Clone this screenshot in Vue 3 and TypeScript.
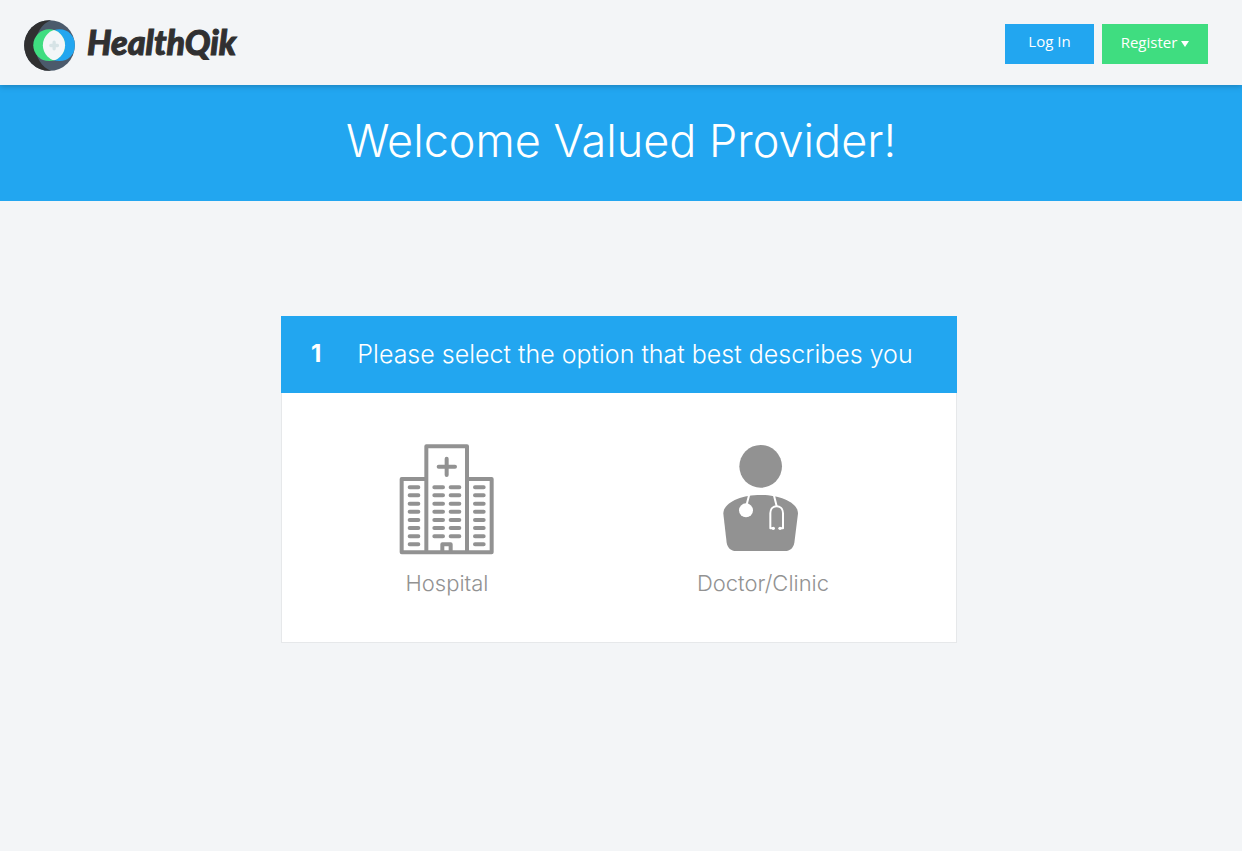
<script setup lang="ts">
import { ref } from 'vue'

type ProviderKind = 'hospital' | 'clinic'

const selected = ref<ProviderKind | null>(null)

const sideRows: number[] = [157, 181, 206, 230, 255, 279, 304, 328]
const middleRows: number[] = sideRows.slice(0, 7)
</script>

<template>
  <div class="page">
    <header class="topbar">
      <a class="brand" href="#">
        <svg class="mark" viewBox="18 17 154 154" aria-hidden="true">
          <defs>
            <clipPath id="disc"><circle cx="95" cy="94" r="76.5" /></clipPath>
            <clipPath id="green-lens"><circle cx="94" cy="93" r="48" /></clipPath>
          </defs>
          <g clip-path="url(#disc)">
            <rect x="18" y="17" width="154" height="154" fill="#4b5a6b" />
            <path d="M18 17H100C72 28 52 58 52 94S72 160 100 171H18Z" fill="#303031" />
            <circle cx="125" cy="93" r="48" fill="#22a6f0" />
            <circle cx="94" cy="93" r="48" fill="#3fdd80" />
            <circle cx="123" cy="93" r="48" fill="#f3f6f8" clip-path="url(#green-lens)" />
          </g>
          <path d="M109 84V104M99 94H119" stroke="#d6e3e6" stroke-width="10" stroke-linecap="round" />
        </svg>
        <span class="wordmark">HealthQik</span>
      </a>
      <nav class="actions">
        <button class="btn login" type="button">Log In</button>
        <button class="btn register" type="button">
          Register
          <svg class="caret" viewBox="0 0 8 6" aria-hidden="true"><path d="M0 0H8L4 6Z" fill="currentColor" /></svg>
        </button>
      </nav>
    </header>

    <section class="banner">
      <h1>Welcome Valued Provider!</h1>
    </section>

    <main class="content">
      <section class="card">
        <h2 class="step">
          <span class="number">1</span>
          <span>Please select the option that best describes you</span>
        </h2>
        <div class="options">
          <button class="option" type="button" :aria-pressed="selected === 'hospital'" @click="selected = 'hospital'">
            <svg class="hospital" viewBox="30 24 288 336" fill="none" stroke="currentColor" stroke-width="12" aria-hidden="true">
              <g stroke-linejoin="round">
                <path d="M112 132H38V352H308V132H234" />
                <path d="M112 352V34H234V352" />
                <path d="M160 352V328H185V352" />
              </g>
              <g stroke-linecap="round">
                <path d="M173 71V120M149 95H198" />
                <path v-for="y in sideRows" :key="`side-${y}`" :d="`M62 ${y}H88M258 ${y}H284`" />
                <path v-for="y in middleRows" :key="`middle-${y}`" :d="`M136 ${y}H162M185 ${y}H211`" />
              </g>
            </svg>
            <span class="label">Hospital</span>
          </button>
          <button class="option" type="button" :aria-pressed="selected === 'clinic'" @click="selected = 'clinic'">
            <svg class="doctor" viewBox="129 24 240 336" aria-hidden="true">
              <circle cx="242" cy="94" r="64" fill="currentColor" />
              <path d="M130 236C130 202 184 180 242 180S354 202 354 236L343 323C340 339 330 348 315 348H168C153 348 143 339 140 323Z" fill="currentColor" />
              <circle cx="198" cy="226" r="21" fill="#fff" />
              <g fill="none" stroke="#fff" stroke-width="6">
                <path d="M208 178L199 212M281 178L290 214" />
                <path d="M279 280H271V235C271 207 309 207 309 235V280H301" stroke-linejoin="round" />
              </g>
              <circle cx="280" cy="280" r="5" fill="#fff" />
              <circle cx="300" cy="280" r="5" fill="#fff" />
            </svg>
            <span class="label">Doctor/Clinic</span>
          </button>
        </div>
      </section>
    </main>
  </div>
</template>

<style>
body {
  margin: 0;
  background: #f3f5f7;
}
</style>

<style scoped>
.page {
  min-height: 100vh;
  background: #f3f5f7;
  font-family: Inter, 'Liberation Sans', sans-serif;
}

.topbar {
  position: relative;
  display: flex;
  justify-content: space-between;
  align-items: center;
  box-sizing: border-box;
  min-height: 85px;
  padding: 0 34px 0 24px;
  background: #f3f5f7;
  box-shadow: 0 1px 6px rgba(0, 0, 0, 0.25);
}

.brand {
  display: flex;
  align-items: center;
  gap: 12px;
  padding-top: 5px;
  color: #303031;
  text-decoration: none;
}

.mark {
  width: 51px;
  height: 51px;
}

.wordmark {
  padding-bottom: 6px;
  font-family: Lato, sans-serif;
  font-size: 34px;
  font-style: italic;
  font-weight: 900;
  line-height: 40px;
  -webkit-text-stroke: 1px #303031;
}

.actions {
  display: flex;
  gap: 8px;
  padding-top: 3px;
}

.btn {
  display: flex;
  justify-content: center;
  align-items: center;
  gap: 4px;
  height: 40px;
  padding: 0 0 6px;
  border: 0;
  color: #fff;
  font-family: 'Open Sans', sans-serif;
  font-size: 15px;
  line-height: 20px;
  cursor: pointer;
}

.login {
  width: 89px;
  background: #22a6f0;
}

.register {
  width: 106px;
  padding-bottom: 4px;
  background: #3fdd80;
}

.caret {
  width: 8px;
  height: 6px;
  margin-top: 4px;
}

.banner {
  padding: 28px 24px 32px;
  background: #22a6f0;
  color: #fff;
  text-align: center;
}

h1 {
  margin: 0;
  font-size: 45px;
  font-weight: 300;
  line-height: 56px;
}

.content {
  display: flex;
  justify-content: center;
  padding: 115px 28px 40px 24px;
}

.card {
  box-sizing: border-box;
  width: 100%;
  max-width: 676px;
  background: #fff;
  box-shadow: inset 0 0 0 1px #e6e8ea;
}

.step {
  display: flex;
  align-items: center;
  gap: 36px;
  min-height: 77px;
  box-sizing: border-box;
  margin: 0;
  padding: 0 30px 2px;
  background: #22a6f0;
  color: #fff;
  font-size: 25px;
  font-weight: 300;
  line-height: 32px;
}

.number {
  font-size: 24px;
  font-weight: 700;
}

.options {
  display: grid;
  grid-template-columns: 1fr 1fr;
  padding: 50px 36px 44px 8px;
}

.option {
  display: flex;
  flex-direction: column;
  align-items: center;
  gap: 12px;
  padding: 0;
  border: 0;
  background: transparent;
  color: #929292;
  font-family: inherit;
  cursor: pointer;
}

.hospital {
  width: 96px;
  height: 112px;
}

.doctor {
  width: 80px;
  height: 112px;
}

.label {
  font-size: 22px;
  font-weight: 300;
  line-height: 32px;
}
</style>
